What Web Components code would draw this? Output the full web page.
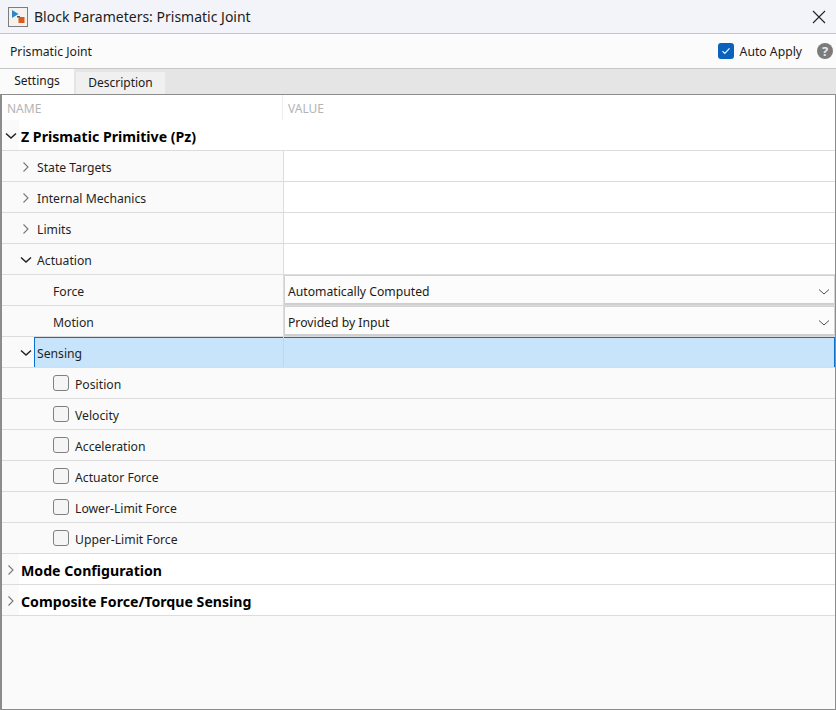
<!DOCTYPE html>
<html>
<head>
<meta charset="utf-8">
<title>Block Parameters: Prismatic Joint</title>
<style>
  html, body { margin: 0; padding: 0; }
  body { width: 836px; height: 710px; overflow: hidden; background: #fff; font-family: "Noto Sans", "Open Sans", sans-serif; color: #1a1a1a; }
  bp-dialog { height: 710px; }
</style>
</head>
<body>
<bp-dialog>
  <bp-titlebar>Block Parameters: Prismatic Joint</bp-titlebar>
  <bp-header>Prismatic Joint</bp-header>
  <bp-tabs></bp-tabs>
  <bp-panel>
    <bp-row kind="section" arrow="open" label="Z Prismatic Primitive (Pz)"></bp-row>
    <bp-row kind="group" arrow="closed" label="State Targets"></bp-row>
    <bp-row kind="group" arrow="closed" label="Internal Mechanics"></bp-row>
    <bp-row kind="group" arrow="closed" label="Limits"></bp-row>
    <bp-row kind="group" arrow="open" label="Actuation"></bp-row>
    <bp-row kind="param" label="Force" value="Automatically Computed"></bp-row>
    <bp-row kind="param" label="Motion" value="Provided by Input"></bp-row>
    <bp-row kind="group" arrow="open" label="Sensing" selected></bp-row>
    <bp-row kind="check" label="Position"></bp-row>
    <bp-row kind="check" label="Velocity"></bp-row>
    <bp-row kind="check" label="Acceleration"></bp-row>
    <bp-row kind="check" label="Actuator Force"></bp-row>
    <bp-row kind="check" label="Lower-Limit Force"></bp-row>
    <bp-row kind="check" label="Upper-Limit Force"></bp-row>
    <bp-row kind="section" arrow="closed" label="Mode Configuration"></bp-row>
    <bp-row kind="section" arrow="closed" label="Composite Force/Torque Sensing"></bp-row>
  </bp-panel>
</bp-dialog>
<script>
// icons used in more than one place
const CHEVRON_RIGHT = `<svg width="16" height="16" viewBox="0 0 16 16"><path d="M5.5 3.5L10 8l-4.5 4.5" fill="none" stroke="#777" stroke-width="1.1"/></svg>`;
const CHEVRON_DOWN = `<svg width="16" height="16" viewBox="0 0 16 16"><path d="M3 5.5L8 10l5-4.5" fill="none" stroke="#222" stroke-width="1.5"/></svg>`;

class BpDialog extends HTMLElement {
  connectedCallback() {
    this.attachShadow({ mode: 'open' }).innerHTML = `
      <style>
        :host { display: flex; flex-direction: column; width: 836px; background: #fff; }
      </style>
      <slot></slot>`;
  }
}

class BpTitlebar extends HTMLElement {
  connectedCallback() {
    this.attachShadow({ mode: 'open' }).innerHTML = `
      <style>
        :host { display: flex; align-items: center; height: 33px; flex: none; background: #f3f4f9; border-bottom: 1px solid #c6c6c9; font-size: 14px; color: #1c1c1c; padding-left: 8px; }
        .logo { width: 20px; height: 20px; margin-right: 6px; }
        .title { flex: 1; }
        .close { width: 14px; height: 14px; margin-right: 10px; }
      </style>
      <svg class="logo" viewBox="0 0 20 20">
        <rect x=".5" y=".5" width="19" height="19" fill="#f4f2ef" stroke="#7d7d7d"/>
        <path d="M4 3L10.5 7L4 11z" fill="#2f86c8"/>
        <path d="M9 9h3v1.5h-3z" fill="#555"/>
        <rect x="10.5" y="10" width="6" height="6" fill="#dc5a1e"/>
      </svg>
      <span class="title"><slot></slot></span>
      <svg class="close" viewBox="0 0 14 14"><path d="M1 1l12 12M13 1L1 13" stroke="#222" stroke-width="1.1" fill="none"/></svg>`;
  }
}

class BpHeader extends HTMLElement {
  connectedCallback() {
    this.attachShadow({ mode: 'open' }).innerHTML = `
      <style>
        :host { display: flex; align-items: center; height: 34px; flex: none; background: #fbfbfb; border-bottom: 1px solid #c6c6c6; font-size: 12.2px; padding: 0 3px 0 10px; color: #1a1a1a; }
        .name { flex: 1; }
        .box { width: 16px; height: 16px; border-radius: 3px; background: #0a62bd; display: flex; align-items: center; justify-content: center; margin-right: 6px; }
        .help { width: 16px; height: 16px; border-radius: 50%; background: #7b7b7b; color: #e8e8e8; font-size: 13px; font-weight: 700; line-height: 16px; text-align: center; margin-left: 15px; }
      </style>
      <span class="name"><slot></slot></span>
      <span class="box"><svg width="10" height="8" viewBox="0 0 10 8"><path d="M1.5 4.2L3.8 6.4L8.5 1.4" fill="none" stroke="#fff" stroke-width="1.1"/></svg></span>
      <span>Auto Apply</span>
      <span class="help">?</span>`;
  }
}

class BpTabs extends HTMLElement {
  connectedCallback() {
    this.attachShadow({ mode: 'open' }).innerHTML = `
      <style>
        :host { display: flex; height: 25px; flex: none; background: #e5e5e5; font-size: 12px; color: #1a1a1a; }
        .tab { display: flex; align-items: center; justify-content: center; box-sizing: border-box; }
        .on { width: 74px; background: #fbfbfb; padding-bottom: 2px; }
        .off { width: 89px; height: 23px; margin: 3px 0 0 2px; background: #f0f0f0; padding-bottom: 2px; }
      </style>
      <div class="tab on">Settings</div>
      <div class="tab off">Description</div>`;
  }
}

class BpPanel extends HTMLElement {
  connectedCallback() {
    this.attachShadow({ mode: 'open' }).innerHTML = `
      <style>
        :host { display: flex; flex-direction: column; flex: 1; margin: 0; box-sizing: border-box; border: 1px solid #8c8c8c; border-left-width: 2px; border-right-width: 1px; background: #fafafa; font-size: 12.2px; }
        .head { display: grid; grid-template-columns: 281px 1fr; height: 25px; background: #fff; color: #b4b4b4; font-size: 12px; }
        .head div { display: flex; align-items: center; padding: 2px 0 0 5px; box-sizing: border-box; }
        .head div:first-child { border-right: 1px solid #ececec; }
      </style>
      <div class="head"><div>NAME</div><div>VALUE</div></div>
      <slot></slot>`;
  }
}

class BpRow extends HTMLElement {
  connectedCallback() {
    const kind = this.getAttribute('kind');
    const label = this.getAttribute('label');
    const value = this.getAttribute('value');
    const arrow = this.getAttribute('arrow');
    const icon = arrow === 'open' ? CHEVRON_DOWN : arrow === 'closed' ? CHEVRON_RIGHT : '';
    const selected = this.hasAttribute('selected');
    let name = '';
    if (kind === 'section') {
      name = `<div class="gutter">${icon}</div><div class="name"><b>${label}</b></div>`;
    } else if (kind === 'group') {
      name = `<div class="gutter wide">${icon}</div><div class="name">${label}</div>`;
    } else if (kind === 'param') {
      name = `<div class="gutter wider"></div><div class="name">${label}</div>`;
    } else {
      name = `<div class="gutter wider"></div><div class="name"><span class="cb"></span>${label}</div>`;
    }
    let val = '';
    if (value) {
      val = `<div class="combo"><span>${value}</span><svg width="12" height="8" viewBox="0 0 12 8"><path d="M1 1.5L6 6l5-4.5" fill="none" stroke="#555" stroke-width="1"/></svg></div>`;
    }
    const layout = (kind === 'section' || kind === 'check') ? 'full' : 'split';
    this.attachShadow({ mode: 'open' }).innerHTML = `
      <style>
        :host { display: block; height: 31px; flex: none; box-sizing: border-box; border-bottom: 1px solid #dcdcdc; }
        .row { display: flex; height: 30px; }
        .cell { display: flex; align-items: stretch; height: 30px; }
        .split .cell { width: 281px; flex: none; border-right: 1px solid #dcdcdc; }
        .full .cell { flex: 1; }
        .gutter { width: 17px; flex: none; display: flex; align-items: center; justify-content: center; background: #fafafa; padding-top: 2px; box-sizing: border-box; }
        .gutter.wide { width: 32px; justify-content: flex-end; }
        .gutter.wider { width: 49px; }
        .name { flex: 1; display: flex; align-items: center; padding: 2px 0 0 2px; color: #1f1f1f; white-space: nowrap; }
        .group .name { padding-left: 3px; }
        .name b { font-size: 14.15px; color: #000; }
        .cb { width: 16px; height: 16px; box-sizing: border-box; border: 1px solid #808080; border-radius: 3px; background: #f5f5f5; margin: -2px 6px 0 0; }
        .value { flex: 1; background: #fff; display: flex; }
        .combo { flex: 1; height: 30px; box-sizing: border-box; background: #fcfcfc; border: 1px solid #d2d2d2; border-bottom: 2px solid #cfcfcf; display: flex; align-items: center; justify-content: space-between; padding: 4px 4px 0 3px; color: #1a1a1a; }
        .section { background: #fff; }
        .check { background: #fafafa; }
        .section .name { background: #fff; }
        .group .name, .param .name { background: #fafafa; }
        .sel .cell { border-right-color: #cdd5db; }
        .sel .name { background: #c8e4fb; box-shadow: inset 1px 0 0 #0a6fd0, inset 0 1px 0 #0a6fd0; }
        .sel .value { background: #c8e4fb; box-shadow: inset 0 1px 0 #0a6fd0, inset -1px 0 0 #0a6fd0; }
      </style>
      <div class="row ${layout} ${kind} ${selected ? 'sel' : ''}">
        <div class="cell">${name}</div>
        ${layout === 'split' ? `<div class="value">${val}</div>` : ''}
      </div>`;
  }
}

customElements.define('bp-dialog', BpDialog);
customElements.define('bp-titlebar', BpTitlebar);
customElements.define('bp-header', BpHeader);
customElements.define('bp-tabs', BpTabs);
customElements.define('bp-panel', BpPanel);
customElements.define('bp-row', BpRow);
</script>
</body>
</html>
